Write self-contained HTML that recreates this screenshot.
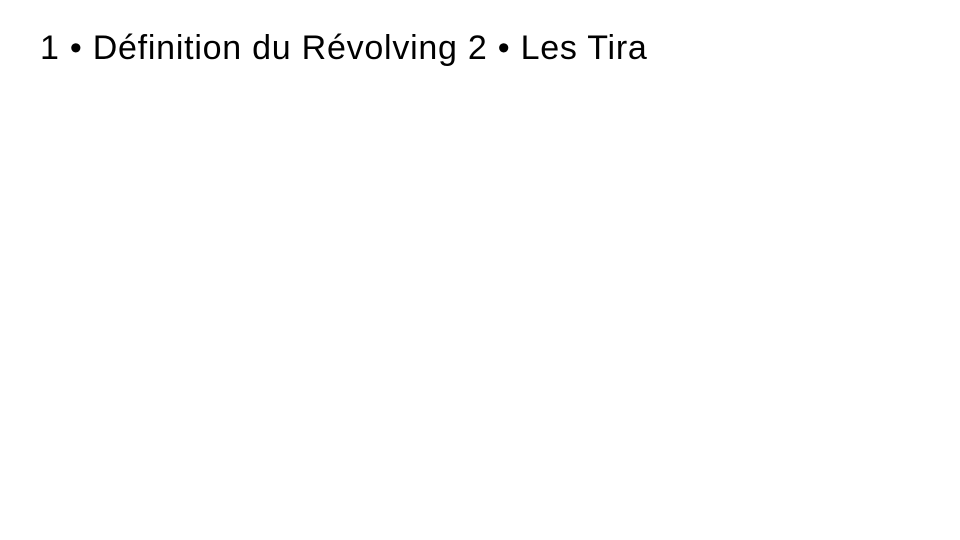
<!DOCTYPE html>
<html><head><meta charset="utf-8"><style>
html,body{margin:0;padding:0;background:#fff;width:960px;height:540px;overflow:hidden}
.t{position:absolute;left:40px;top:31px;font-family:"Liberation Sans",sans-serif;font-size:34px;line-height:34px;color:#000;letter-spacing:0.75px;white-space:nowrap}
</style></head><body>
<div class="t">1 • Définition du Révolving 2 • Les Tira</div>
</body></html>
